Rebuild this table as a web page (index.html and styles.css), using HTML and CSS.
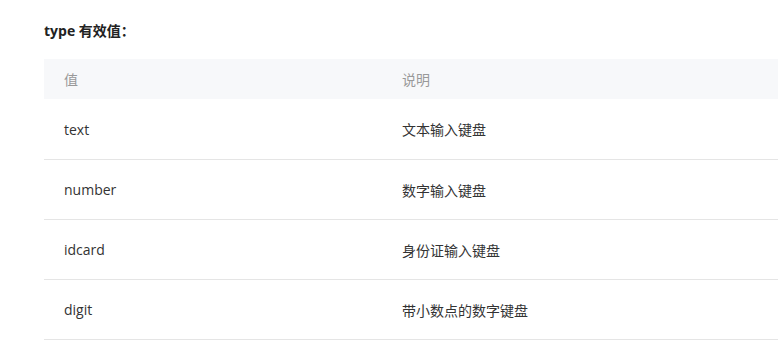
FILE: index.html
```html
<!DOCTYPE html>
<html lang="zh">
<head>
<meta charset="utf-8">
<link rel="stylesheet" href="styles.css">
</head>
<body>
<div class="doc">
  <p class="title"><strong>type 有效值：</strong></p>
  <table class="tbl">
    <thead>
      <tr><th class="c1">值</th><th class="c2">说明</th></tr>
    </thead>
    <tbody>
      <tr><td>text</td><td>文本输入键盘</td></tr>
      <tr><td>number</td><td>数字输入键盘</td></tr>
      <tr><td>idcard</td><td>身份证输入键盘</td></tr>
      <tr><td>digit</td><td>带小数点的数字键盘</td></tr>
    </tbody>
  </table>
</div>
</body>
</html>
```
FILE: styles.css
```css
html, body {
  margin: 0;
  padding: 0;
  background: #fff;
}
body {
  font-family: "Open Sans", "Noto Sans CJK SC", sans-serif;
  font-size: 14px;
  color: #333;
}
.doc {
  padding: 20px 0 0 44px;
}
.title {
  margin: 0 0 17px 0;
  line-height: 22px;
  font-size: 14px;
  color: #222;
}
.title strong {
  font-weight: 700;
}
.tbl {
  border-collapse: collapse;
  width: 734px;
  table-layout: fixed;
}
.c1 { width: 298px; }
.tbl th {
  height: 40px;
  padding: 0 20px;
  background: #f7f8fa;
  color: #999;
  font-weight: 400;
  text-align: left;
}
.tbl tbody tr:first-child td {
  height: 60px;
}
.tbl td {
  height: 59px;
  padding: 0 20px;
  border-bottom: 1px solid #e5e5e5;
  text-align: left;
  color: #333;
}
```
